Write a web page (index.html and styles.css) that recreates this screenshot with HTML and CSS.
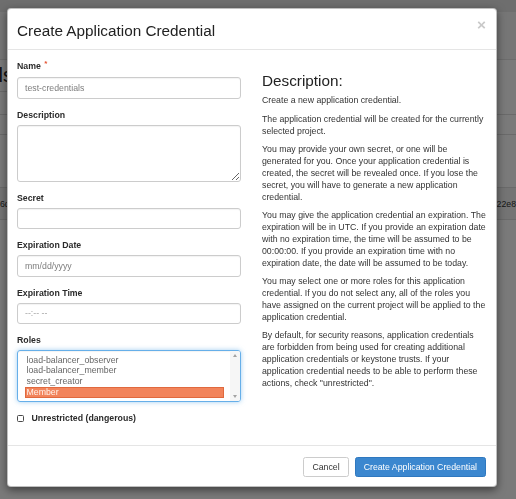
FILE: index.html
```html
<!DOCTYPE html>
<html lang="en">
<head>
<meta charset="utf-8">
<title>Create Application Credential</title>
<link rel="stylesheet" href="styles.css">
</head>
<body>

<div class="page">
	<div class="topbar"></div>
	<div class="page-head"></div>
	<div class="page-title"><h1>Application Credentials</h1></div>
	<div class="row-line"></div>
	<div class="row-line"></div>
	<div class="row-line tall"></div>
	<div class="row-line striped"><span>6d</span><span>22e8</span></div>
</div>

<div class="backdrop"></div>

<div class="modal">
	<div class="modal-header">
		<h4 class="modal-title">Create Application Credential</h4>
		<span class="close">&times;</span>
	</div>

	<div class="modal-body">
		<div class="col-form">
			<div class="form-group">
				<label>Name <span class="req">*</span></label>
				<input class="form-control" type="text" placeholder="test-credentials">
			</div>
			<div class="form-group">
				<label>Description</label>
				<textarea class="form-control area"></textarea>
			</div>
			<div class="form-group">
				<label>Secret</label>
				<input class="form-control" type="text">
			</div>
			<div class="form-group">
				<label>Expiration Date</label>
				<input class="form-control" type="text" placeholder="mm/dd/yyyy">
			</div>
			<div class="form-group">
				<label>Expiration Time</label>
				<input class="form-control faint" type="text" placeholder="--:-- --">
			</div>
			<div class="form-group">
				<label>Roles</label>
				<div class="listbox">
					<ul class="options">
						<li>load-balancer_observer</li>
						<li>load-balancer_member</li>
						<li>secret_creator</li>
						<li class="selected">Member</li>
					</ul>
					<div class="scrollbar">
						<span class="arrow up"></span>
						<span class="arrow down"></span>
					</div>
				</div>
			</div>
			<div class="form-group check">
				<input type="checkbox" class="box">
				<label class="inline">Unrestricted (dangerous)</label>
			</div>
		</div>

		<div class="col-help">
			<h3>Description:</h3>
			<p>Create a new application credential.</p>
			<p>The application credential will be created for the currently selected project.</p>
			<p>You may provide your own secret, or one will be generated for you. Once your application credential is created, the secret will be revealed once. If you lose the secret, you will have to generate a new application credential.</p>
			<p>You may give the application credential an expiration. The expiration will be in UTC. If you provide an expiration date with no expiration time, the time will be assumed to be 00:00:00. If you provide an expiration time with no expiration date, the date will be assumed to be today.</p>
			<p>You may select one or more roles for this application credential. If you do not select any, all of the roles you have assigned on the current project will be applied to the application credential.</p>
			<p>By default, for security reasons, application credentials are forbidden from being used for creating additional application credentials or keystone trusts. If your application credential needs to be able to perform these actions, check "unrestricted".</p>
		</div>
	</div>

	<div class="modal-footer">
		<button class="btn">Cancel</button>
		<button class="btn btn-primary">Create Application Credential</button>
	</div>
</div>

</body>
</html>
```

FILE: styles.css
```css
html, body {
	height: 100%;
}

body {
	margin: 0;
	overflow: hidden;
	background: #fff;
	color: #333;
	font-family: "Liberation Sans", Arial, sans-serif;
	font-size: 8.75px;
	line-height: 12px;
}

/* page behind the dialog */
.topbar {
	height: 12px;
	background: #e6e6e6;
}

.page-head {
	height: 47px;
	border-bottom: 1px solid #e2e2e2;
	background: #f7f7f7;
}

.page-title {
	width: 13px;
	height: 31px;
	overflow: hidden;
	direction: rtl;
	white-space: nowrap;
	border-bottom: 1px solid #dedede;
}

.page-title h1 {
	margin: 0;
	font-size: 20px;
	line-height: 31px;
	font-weight: 500;
	color: #222;
}

.row-line {
	height: 22px;
	border-bottom: 1px solid #dedede;
}

.row-line + .row-line {
	height: 19px;
}

.row-line.tall {
	height: 52px;
}

.row-line.striped {
	height: 31px;
	display: flex;
	align-items: center;
	justify-content: space-between;
	background: #f2f2f2;
	color: #333;
	font-size: 8.75px;
}

.backdrop {
	position: fixed;
	top: 0;
	right: 0;
	bottom: 0;
	left: 0;
	background: rgba(0, 0, 0, 0.52);
}

/* dialog */
.modal {
	position: absolute;
	top: 8px;
	left: 7px;
	width: 490px;
	box-sizing: border-box;
	background: #fff;
	border: 1px solid rgba(0, 0, 0, 0.25);
	border-radius: 4px;
	box-shadow: 0 3px 9px rgba(0, 0, 0, 0.5);
}

.modal-header {
	display: flex;
	align-items: flex-start;
	justify-content: space-between;
	padding: 11px 10px 8px 9px;
	border-bottom: 1px solid #e5e5e5;
}

.modal-title {
	margin: 0;
	font-size: 15.3px;
	line-height: 21px;
	font-weight: normal;
	color: #222;
}

.close {
	margin-top: -3px;
	font-size: 15.3px;
	line-height: 15px;
	font-weight: bold;
	color: #c9c9c9;
}

.modal-body {
	display: grid;
	grid-template-columns: 224px 225px;
	column-gap: 21px;
	padding: 10px 10px 11px 9px;
}

.form-group {
	margin-bottom: 10px;
}

label {
	display: block;
	margin-bottom: 4px;
	font-weight: bold;
	color: #2b2b2b;
}

.req {
	position: relative;
	top: -3px;
	margin-left: 1px;
	font-size: 8px;
	color: #e4502e;
}

.form-control {
	display: block;
	width: 100%;
	height: 21.5px;
	margin: 0;
	padding: 0 7px;
	box-sizing: border-box;
	border: 1px solid #ccc;
	border-radius: 3px;
	box-shadow: inset 0 1px 1px rgba(0, 0, 0, 0.05);
	background: #fff;
	font-family: inherit;
	font-size: 8.75px;
	color: #555;
}

.form-control::placeholder {
	color: #7d7d7d;
}

.form-control.faint::placeholder {
	color: #a5a5a5;
}

.area {
	height: 57px;
	resize: vertical;
}

.listbox {
	display: flex;
	height: 52px;
	box-sizing: border-box;
	border: 1px solid #66afe9;
	border-radius: 3px;
	box-shadow: inset 0 1px 1px rgba(0, 0, 0, 0.05), 0 0 5px rgba(102, 175, 233, 0.6);
	overflow: hidden;
}

.options {
	flex: 1;
	margin: 0;
	padding: 3.8px 6px 0 7px;
	list-style-type: none;
	color: #666;
}

.options li {
	height: 10.7px;
	padding-left: 1.5px;
	line-height: 10.7px;
	box-sizing: border-box;
	white-space: nowrap;
}

.options li.selected {
	background: #f2845b;
	border: 1px solid #e0693e;
	padding-left: 0.5px;
	line-height: 8.7px;
	color: #fff2ea;
}

.scrollbar {
	display: flex;
	flex-direction: column;
	justify-content: space-between;
	align-items: center;
	width: 10px;
	padding: 3px 0 3px;
	box-sizing: border-box;
	background: #f6f6f6;
}

.arrow {
	width: 0;
	height: 0;
	border-left: 2.5px solid transparent;
	border-right: 2.5px solid transparent;
}

.arrow.up {
	border-bottom: 3px solid #a3a3a3;
}

.arrow.down {
	border-top: 3px solid #a3a3a3;
}

.check {
	display: flex;
	align-items: center;
	gap: 7.5px;
	height: 12px;
}

.box {
	appearance: none;
	-webkit-appearance: none;
	width: 7px;
	height: 7px;
	margin: 1px 0 0 0;
	border: 1px solid #4a4a4a;
	border-radius: 1.5px;
	background: #fff;
}

label.inline {
	margin: 0;
}

.col-help h3 {
	margin: 12.5px 0 5.2px 0;
	font-size: 15.3px;
	line-height: 16.8px;
	font-weight: normal;
	color: #222;
}

.col-help p {
	margin: 0 0 6.2px 0;
}

.modal-footer {
	display: flex;
	justify-content: flex-end;
	gap: 6px;
	padding: 11px 10px 9px 10px;
	border-top: 1px solid #e5e5e5;
}

.btn {
	height: 20px;
	margin: 0;
	padding: 0 8px;
	border: 1px solid #ccc;
	border-radius: 2.5px;
	background: #fff;
	font-family: inherit;
	font-size: 8.75px;
	line-height: 18px;
	color: #333;
}

.btn-primary {
	background: #3b87cf;
	border-color: #2f78bf;
	color: #fff;
}
```
